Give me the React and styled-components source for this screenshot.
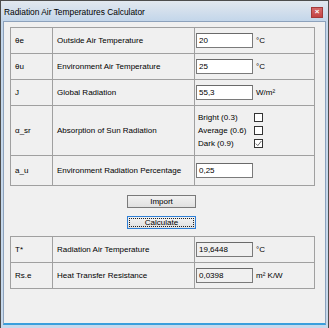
import React from "react";
import styled, { createGlobalStyle } from "styled-components";

const FONT = '"Liberation Sans", Arial, sans-serif';

const Global = createGlobalStyle`
  html, body { margin: 0; padding: 0; background: #6e6e6e; }
  * { box-sizing: border-box; }
`;

const Window = styled.div`
  width: 329px;
  height: 328px;
  display: flex;
  flex-direction: column;
  border: 1px solid #4d4d4d;
  border-bottom: none;
  background: linear-gradient(#e2e8ef 0px, #c3d6ea 20px, #c7d9ec 100%);
  padding: 0 2px 0 2px;
  font-family: ${FONT};
`;

const TitleBar = styled.div`
  height: 20px;
  display: flex;
  align-items: center;
  justify-content: space-between;
  padding: 1px 2px 0 1px;
`;

const Title = styled.span`
  font-size: 8.4px;
  color: #000;
`;

const CloseButton = styled.div`
  width: 12px;
  height: 11px;
  margin-top: 1px;
  margin-right: 1px;
  background: linear-gradient(#d56a6a, #c44343);
  border: 1px solid #a33a3a;
  color: #fff;
  font-size: 8px;
  font-weight: bold;
  display: flex;
  align-items: center;
  justify-content: center;
  line-height: 1;
`;

const Client = styled.div`
  flex: 1;
  background: #f0f0f0;
  border: 1px solid #8da2bc;
  border-bottom: 2px solid #3a9fdc;
  margin-bottom: 3px;
  padding: 5px 0 0 6px;
  display: flex;
  flex-direction: column;
  font-size: 8px;
  color: #000;
`;

const Table = styled.div`
  display: grid;
  grid-template-columns: 42px 142px 120px;
  border-top: 1px solid #a0a0a0;
  border-left: 1px solid #a0a0a0;
  width: max-content;
`;

const Cell = styled.div`
  height: ${(p) => p.$h}px;
  border-right: 1px solid #a0a0a0;
  border-bottom: 1px solid #a0a0a0;
  display: flex;
  align-items: center;
  padding-left: ${(p) => (p.$field ? 1 : 4)}px;
`;

const Input = styled.div`
  width: 57px;
  height: 15px;
  border: 1px solid #7a7a7a;
  border-top-color: #6a6a6a;
  background: ${(p) => (p.$readonly ? "#f0f0f0" : "#fff")};
  padding: 0 2px;
  display: flex;
  align-items: center;
  font-size: 8px;
`;

const Unit = styled.span`
  margin-left: 3px;
`;

const ChoiceList = styled.div`
  display: grid;
  grid-template-columns: 56px 10px;
  row-gap: 4px;
  align-items: center;
  padding-left: 2px;
`;

const Box = styled.div`
  width: 9px;
  height: 9px;
  border: 1px solid #333;
  background: #fff;
  display: flex;
  align-items: center;
  justify-content: center;
`;

const Buttons = styled.div`
  width: 305px;
  display: flex;
  flex-direction: column;
  align-items: center;
  gap: 8px;
  padding: 9px 0 7px;
`;

const Button = styled.div`
  width: 69px;
  height: 13px;
  margin-left: -2px;
  border: 1px solid ${(p) => (p.$focus ? "#2e7fd6" : "#7a7a7a")};
  background: linear-gradient(#f2f2f2, #e0e0e0);
  display: flex;
  align-items: center;
  justify-content: center;
  font-size: 8px;
  position: relative;
  &::after {
    content: "";
    display: ${(p) => (p.$focus ? "block" : "none")};
    position: absolute;
    inset: 1px;
    border: 1px dotted #222;
  }
`;

const Check = () => (
  <svg width="7" height="7" viewBox="0 0 7 7">
    <path d="M0.8 3.6 L2.8 5.6 L6.4 1" fill="none" stroke="#555" strokeWidth="0.9" />
  </svg>
);

const inputRows = [
  { sym: "θe", label: "Outside Air Temperature", value: "20", unit: "°C" },
  { sym: "θu", label: "Environment Air Temperature", value: "25", unit: "°C" },
  { sym: "J", label: "Global Radiation", value: "55,3", unit: "W/m²" },
];

const choices = [
  { label: "Bright (0.3)", checked: false },
  { label: "Average (0.6)", checked: false },
  { label: "Dark (0.9)", checked: true },
];

const outputs = [
  { sym: "T*", label: "Radiation Air Temperature", value: "19,6448", unit: "°C" },
  { sym: "Rs.e", label: "Heat Transfer Resistance", value: "0,0398", unit: "m² K/W" },
];

export default function App() {
  return (
    <>
      <Global />
      <Window>
        <TitleBar>
          <Title>Radiation Air Temperatures Calculator</Title>
          <CloseButton>×</CloseButton>
        </TitleBar>
        <Client>
          <Table>
            {inputRows.map((r) => (
              <React.Fragment key={r.sym}>
                <Cell $h={26}>{r.sym}</Cell>
                <Cell $h={26}>{r.label}</Cell>
                <Cell $h={26} $field>
                  <Input>{r.value}</Input>
                  <Unit>{r.unit}</Unit>
                </Cell>
              </React.Fragment>
            ))}
            <Cell $h={50}>α_sr</Cell>
            <Cell $h={50}>Absorption of Sun Radiation</Cell>
            <Cell $h={50} $field>
              <ChoiceList>
                {choices.map((c) => (
                  <React.Fragment key={c.label}>
                    <span>{c.label}</span>
                    <Box>{c.checked && <Check />}</Box>
                  </React.Fragment>
                ))}
              </ChoiceList>
            </Cell>
            <Cell $h={30}>a_u</Cell>
            <Cell $h={30}>Environment Radiation Percentage</Cell>
            <Cell $h={30} $field>
              <Input>0,25</Input>
            </Cell>
          </Table>
          <Buttons>
            <Button>Import</Button>
            <Button $focus>Calculate</Button>
          </Buttons>
          <Table>
            {outputs.map((r) => (
              <React.Fragment key={r.sym}>
                <Cell $h={26}>{r.sym}</Cell>
                <Cell $h={26}>{r.label}</Cell>
                <Cell $h={26} $field>
                  <Input $readonly>{r.value}</Input>
                  <Unit>{r.unit}</Unit>
                </Cell>
              </React.Fragment>
            ))}
          </Table>
        </Client>
      </Window>
    </>
  );
}
